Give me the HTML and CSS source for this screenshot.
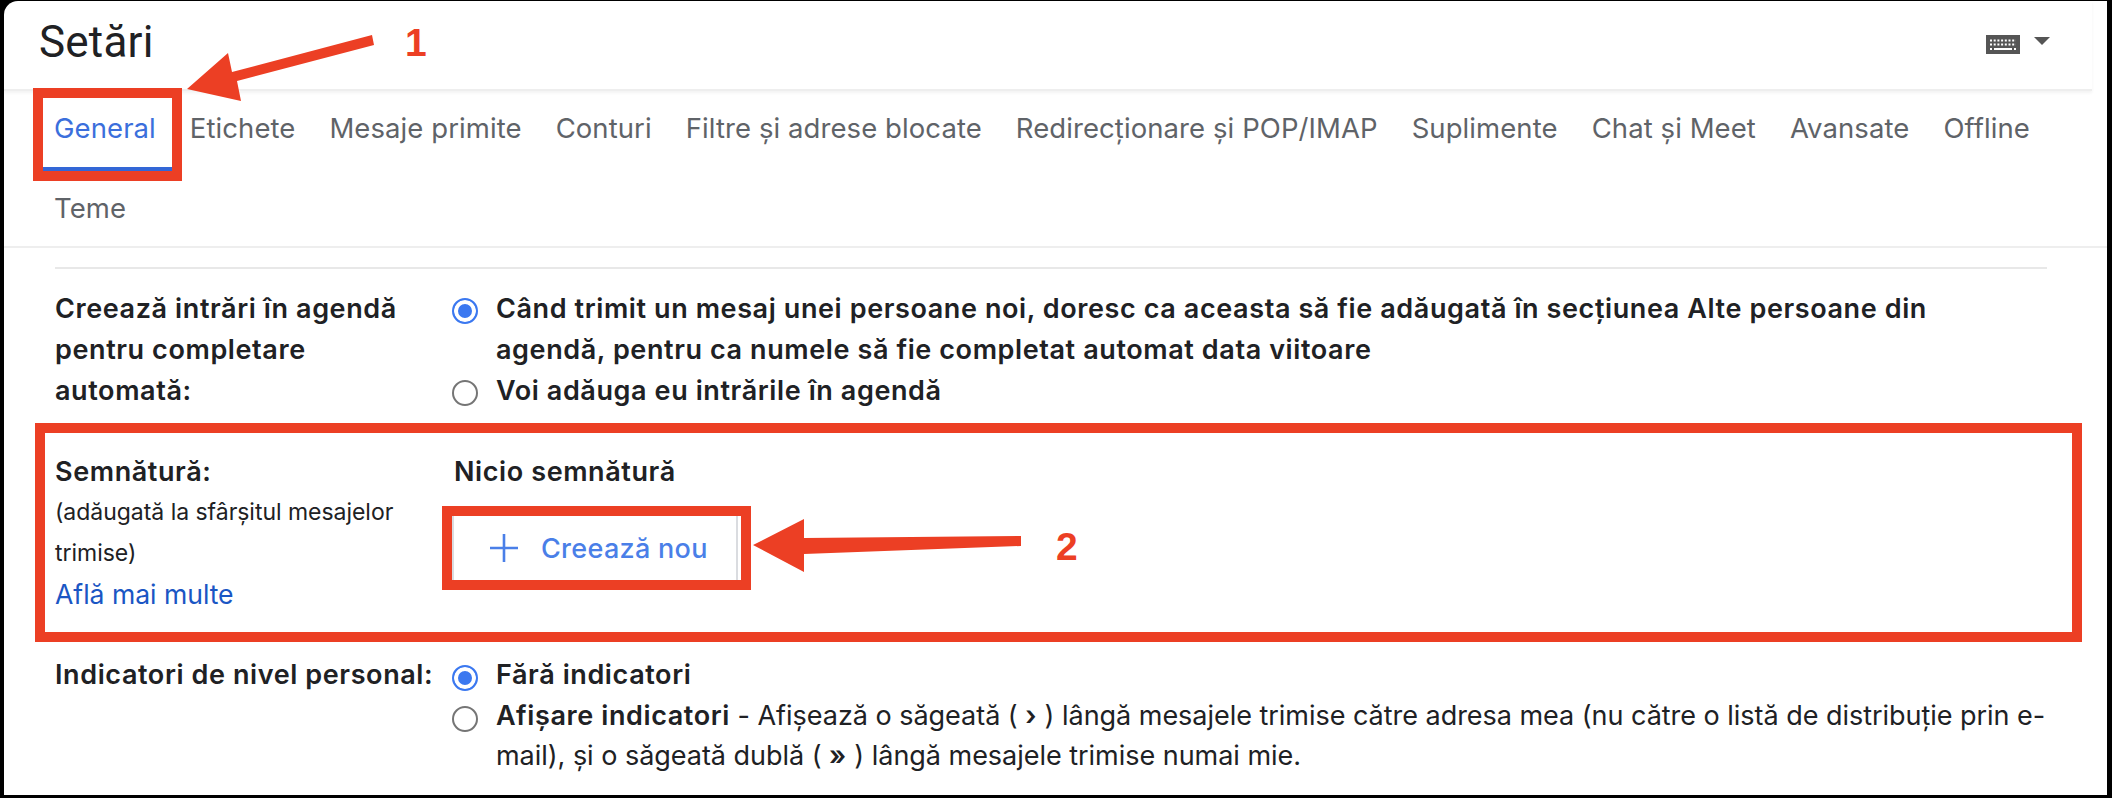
FILE: index.html
```html
<!DOCTYPE html>
<html lang="ro">
<head>
<meta charset="utf-8">
<title>Setări</title>
<link rel="stylesheet" href="styles.css">
</head>
<body>
<div class="frame">
  <header class="top">
    <h1 class="title">Setări</h1>
    <div class="input-tools">
      <svg class="kbd" width="34" height="19" viewBox="0 0 34 19">
        <rect width="34" height="19" fill="#555"/>
        <path d="M4 5.5h26M4 9.5h26" stroke="#fff" stroke-width="2" stroke-dasharray="2 1.7" fill="none"/>
        <path d="M8 14h18" stroke="#fff" stroke-width="2" fill="none"/>
        <path d="M4 14h2M28 14h2" stroke="#fff" stroke-width="2" fill="none"/>
      </svg>
      <svg class="caret" width="16" height="8" viewBox="0 0 16 8"><path d="M0 0h16L8 8z" fill="#555"/></svg>
    </div>
  </header>
  <nav class="tabs">
    <a class="tab active">General</a>
    <a class="tab">Etichete</a>
    <a class="tab">Mesaje primite</a>
    <a class="tab">Conturi</a>
    <a class="tab">Filtre și adrese blocate</a>
    <a class="tab">Redirecționare și POP/IMAP</a>
    <a class="tab">Suplimente</a>
    <a class="tab">Chat și Meet</a>
    <a class="tab">Avansate</a>
    <a class="tab">Offline</a>
    <a class="tab">Teme</a>
  </nav>
  <main class="settings">
    <section class="row row-contacts">
      <div class="label"><b>Creează intrări în agendă<br>pentru completare<br>automată:</b></div>
      <div class="value">
        <div class="option">
          <span class="radio on"></span>
          <b>Când trimit un mesaj unei persoane noi, doresc ca aceasta să fie adăugată în secțiunea Alte persoane din<br>agendă, pentru ca numele să fie completat automat data viitoare</b>
        </div>
        <div class="option">
          <span class="radio"></span>
          <b>Voi adăuga eu intrările în agendă</b>
        </div>
      </div>
    </section>
    <section class="row row-signature">
      <div class="label">
        <b>Semnătură:</b>
        <div class="hint">(adăugată la sfârșitul mesajelor<br>trimise)</div>
        <a class="link">Află mai multe</a>
      </div>
      <div class="value plain">
        <b>Nicio semnătură</b>
        <button class="create" type="button">
          <svg width="28" height="28" viewBox="0 0 28 28"><path d="M14 0v28M0 14h28" stroke="#4a7fe8" stroke-width="2.6" fill="none"/></svg>
          <span>Creează nou</span>
        </button>
      </div>
    </section>
    <section class="row row-indicators">
      <div class="label"><b>Indicatori de nivel personal:</b></div>
      <div class="value">
        <div class="option">
          <span class="radio on"></span>
          <b>Fără indicatori</b>
        </div>
        <div class="option">
          <span class="radio"></span>
          <span class="fixed-lines"><b>Afișare indicatori</b> - Afișează o săgeată ( <b>›</b> ) lângă mesajele trimise către adresa mea (nu către o listă de distribuție prin e-<br>mail), și o săgeată dublă ( <b>»</b> ) lângă mesajele trimise numai mie.</span>
        </div>
      </div>
    </section>
  </main>
</div>
<svg class="notes" width="2112" height="798" viewBox="0 0 2112 798">
  <g fill="none" stroke="#ec3f24" stroke-width="10">
    <rect x="38" y="93" width="139" height="83"/>
    <rect x="40" y="428" width="2037" height="209"/>
    <rect x="447" y="511" width="299" height="74"/>
  </g>
  <g fill="#ec3f24">
    <polygon points="187,89 228,53 232,72 372,35 374,45 237,81 241,101"/>
    <polygon points="753,545 804,519 804,538 1021,536 1021,546 804,554 804,572"/>
    <text class="num" x="405" y="56">1</text>
    <text class="num" x="1056" y="560">2</text>
  </g>
</svg>
</body>
</html>
```

FILE: styles.css
```css
* { box-sizing: border-box; }
html, body { margin: 0; height: 798px; overflow: hidden; background: #000; }
body { position: relative; font-family: Inter, Roboto, "Liberation Sans", sans-serif; color: #202124; }
.frame { margin: 1px 5px 0 4px; height: 794px; background: #fff; border-top-left-radius: 14px; overflow: hidden; }
.top { display: flex; align-items: center; justify-content: space-between; height: 90px; margin-right: 15px; padding: 0 42px 6px 35px; border-bottom: 2px solid #eee; box-shadow: 0 2px 3px rgba(0,0,0,.05); }
.title { margin: 0; font-family: Roboto, sans-serif; font-size: 44px; font-weight: 400; line-height: 60px; letter-spacing: .2px; }
.input-tools { display: flex; align-items: flex-start; gap: 14px; margin-top: 4px; }
.caret { margin-top: 2px; }
.tabs { display: flex; flex-wrap: wrap; padding-left: 39px; height: 157px; border-bottom: 2px solid #eee; align-content: flex-start; }
.tab { display: block; height: 79px; line-height: 75px; padding: 0 11px; margin-right: 12px; font-size: 27.5px; letter-spacing: .08px; color: #5f6368; }
.tab.active { color: #3b6fdc; height: 80px; padding-right: 16px; margin-right: 7px; border-bottom: 4px solid #3367d6; }
.settings { margin: 19px 60px 0 51px; padding-top: 19px; border-top: 2px solid #e8e8e8; }
.row { display: grid; grid-template-columns: 399px 1fr; font-size: 27px; line-height: 41px; letter-spacing: -.03px; }
.row b { font-weight: 600; letter-spacing: .6px; }
.row-signature { margin-top: 40px; }
.row-indicators { margin-top: 40px; line-height: 40.5px; }
.value { margin-left: -2px; }
.value.plain { margin-left: 0; }
.option { display: flex; align-items: flex-start; gap: 18px; }
.fixed-lines { white-space: nowrap; }
.radio { flex: none; width: 26px; height: 26px; margin-top: 10px; border: 2px solid #757575; border-radius: 50%; background: #fff; }
.radio.on { border-color: #3b78f0; background: #3b78f0; box-shadow: inset 0 0 0 4px #fff; }
.hint { font-size: 23px; }
.link { font-size: 26.6px; color: #1a56c4; }
.create { display: flex; align-items: center; gap: 23px; width: 286px; height: 72px; margin: 20px 0 0 -2px; padding: 0 0 0 36px; background: #fff; border: 2px solid #dadce0; border-radius: 4px; font: 500 27px Inter, sans-serif; letter-spacing: .3px; color: #4a7fe8; }
.notes { position: absolute; left: 0; top: 0; }
.num { font-family: "Liberation Sans", sans-serif; font-weight: 700; font-size: 39px; }
```
